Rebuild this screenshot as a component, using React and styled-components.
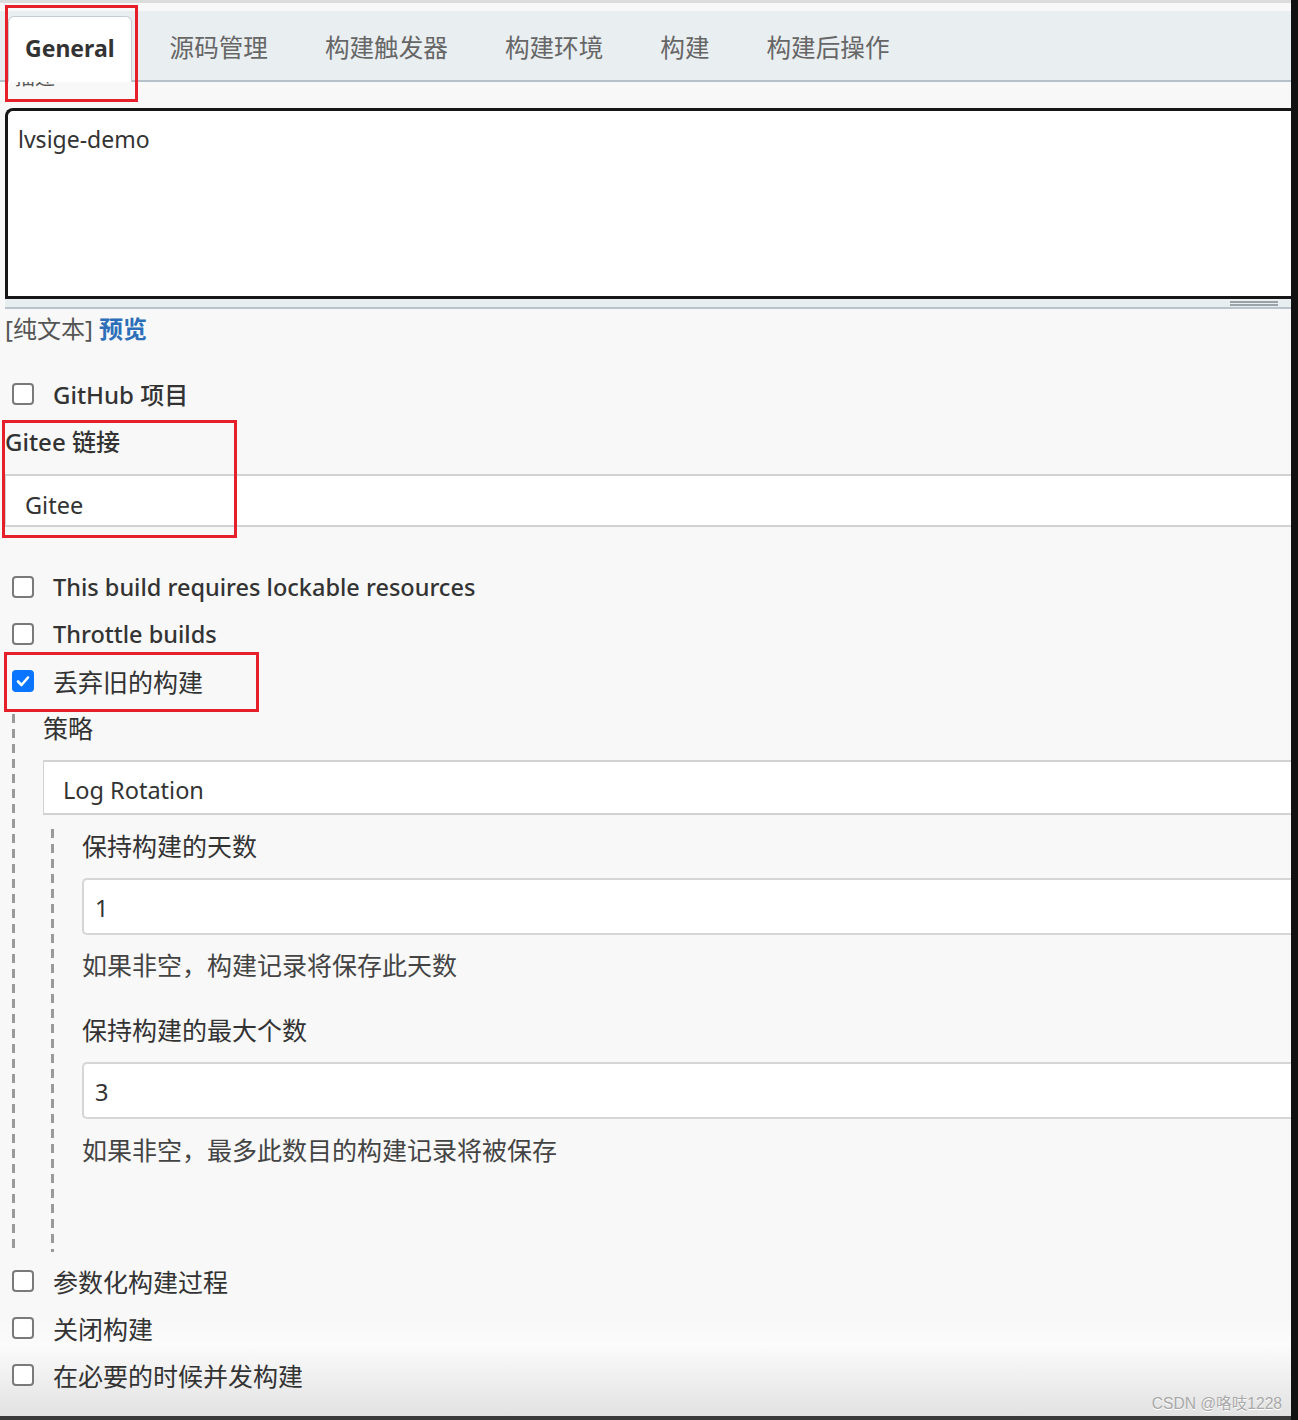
import React from "react";
import styled, { createGlobalStyle } from "styled-components";

const GlobalStyle = createGlobalStyle`
  html, body { margin: 0; padding: 0; }
  body {
    background: #f8f8f8;
    font-family: "Noto Sans", "Noto Sans CJK SC", sans-serif;
    color: #333;
  }
  * { box-sizing: border-box; }
`;

const Frame = styled.div`
  position: relative;
  width: 1298px;
  height: 1420px;
  display: flex;
  overflow: hidden;
  background: linear-gradient(#f8f8f8 0, #f8f8f8 1320px, #fbfbfb 1345px, #e2e2e2 1416px);
`;

const Main = styled.div`
  flex: 1;
  min-width: 0;
  display: flex;
  flex-direction: column;
  border-top: 3px solid #dcdcdc;
  border-bottom: 4px solid #3a3a3a;
`;

const RightEdge = styled.div`
  width: 7px;
  background: #111;
`;

const TabBar = styled.div`
  position: relative;
  z-index: 1;
  margin-top: 8px;
  height: 71px;
  background: #e9eef1;
  border-bottom: 2px solid #b7c1c9;
  display: flex;
  align-items: flex-end;
  padding-left: 8px;
`;

const Tab = styled.div`
  height: 66px;
  display: flex;
  align-items: center;
  padding-bottom: 3px;
  font-size: ${(p) => (p.$active ? "23px" : "24.6px")};
  font-weight: ${(p) => (p.$active ? 700 : 400)};
  color: ${(p) => (p.$active ? "#333" : "#666")};
  padding-left: ${(p) => (p.$active ? "16px" : "29px")};
  padding-right: ${(p) => (p.$active ? "16px" : "28px")};
  margin-bottom: ${(p) => (p.$active ? "-2px" : "0")};
  margin-right: ${(p) => (p.$active ? "9px" : "0")};
  background: ${(p) => (p.$active ? "#fff" : "transparent")};
  border: ${(p) => (p.$active ? "1px solid #c5ccd2" : "none")};
  border-bottom: none;
  border-radius: 6px 6px 0 0;
  white-space: nowrap;
`;

const DescLabel = styled.div`
  margin-top: -16px;
  padding-left: 15px;
  font-size: 20px;
  line-height: 24px;
  color: #555;
`;

const TextArea = styled.textarea`
  display: block;
  margin: 18px 0 0 5px;
  width: calc(100% - 5px);
  height: 191px;
  border: 3px solid #161616;
  border-right: none;
  border-radius: 8px 0 0 0;
  padding: 12px 10px;
  font-family: inherit;
  font-size: 23px;
  line-height: 32px;
  color: #333;
  background: #fff;
  resize: none;
  outline: none;
`;

const ResizeStrip = styled.div`
  margin-left: 5px;
  height: 10px;
  background: #e8edf0;
  border-bottom: 2px solid #b9c3cb;
  display: flex;
  justify-content: flex-end;
  align-items: center;
  padding-right: 13px;
`;

const Grip = styled.div`
  width: 48px;
  height: 5px;
  border-top: 2px solid #9aa3a8;
  border-bottom: 2px solid #9aa3a8;
`;

const PreviewRow = styled.div`
  margin-top: 4px;
  padding-left: 5px;
  font-size: 24px;
  line-height: 32px;
  color: #555;
`;

const PreviewLink = styled.span`
  color: #2c6fb8;
  font-weight: 700;
`;

const CheckRow = styled.div`
  display: flex;
  align-items: center;
  height: 47px;
  padding-left: 12px;
  margin-top: ${(p) => p.$mt || 0}px;
  font-size: ${(p) => p.$size}px;
  font-weight: ${(p) => p.$weight};
  color: #333;
`;

const Box = styled.span`
  width: 22px;
  height: 22px;
  margin-right: 19px;
  border-radius: 4px;
  border: ${(p) => (p.$checked ? "none" : "2px solid #7a7a7a")};
  background: ${(p) => (p.$checked ? "#0a75ff" : "#fff")};
  display: flex;
  align-items: center;
  justify-content: center;
  flex: none;
`;

const FieldLabel = styled.div`
  padding-left: ${(p) => p.$pl || 0}px;
  margin-top: ${(p) => p.$mt || 0}px;
  font-size: ${(p) => p.$size || 25}px;
  line-height: 32px;
  font-weight: ${(p) => p.$weight || 400};
  color: #333;
`;

const SelectBox = styled.div`
  margin-top: ${(p) => p.$mt || 0}px;
  margin-left: ${(p) => p.$ml || 0}px;
  height: ${(p) => p.$h}px;
  background: #fff;
  border-style: solid;
  border-color: #d2d2d2;
  border-width: 2px 0 2px 1px;
  display: flex;
  align-items: center;
  padding-left: 19px;
  padding-top: ${(p) => p.$pt || 0}px;
  font-size: 23.5px;
  color: #333;
`;

const InputBox = styled.div`
  margin-top: ${(p) => p.$mt || 0}px;
  height: 57px;
  background: #fff;
  border: 2px solid #d6d6d6;
  border-right: none;
  border-radius: 5px 0 0 5px;
  display: flex;
  align-items: center;
  padding-left: 11px;
  padding-top: 3px;
  font-size: 23.5px;
  color: #333;
`;

const Help = styled.div`
  margin-top: ${(p) => p.$mt || 0}px;
  font-size: 25px;
  line-height: 32px;
  color: #444;
`;

const Nested = styled.div`
  margin-left: ${(p) => p.$ml}px;
  margin-top: ${(p) => p.$mt || 0}px;
  background-image: repeating-linear-gradient(to bottom, #9a9a9a 0, #9a9a9a 9px, transparent 9px, transparent 15px);
  background-repeat: no-repeat;
  background-size: 3px 100%;
  background-position: left top 4px;
  padding-left: 31px;
  padding-top: ${(p) => p.$pt || 0}px;
  padding-bottom: ${(p) => p.$pb || 0}px;
`;

const Annotation = styled.div`
  position: absolute;
  left: ${(p) => p.$x}px;
  top: ${(p) => p.$y}px;
  width: ${(p) => p.$w}px;
  height: ${(p) => p.$h}px;
  border: 3px solid #e5202b;
  pointer-events: none;
  z-index: 2;
`;

const Watermark = styled.div`
  position: absolute;
  right: 16px;
  bottom: 7px;
  font-family: "Liberation Sans", "Noto Sans CJK SC", sans-serif;
  font-size: 15.6px;
  color: #a8a8a8;
  text-shadow: 0 1px 0 #fff;
`;

const Check = () => (
  <svg width="16" height="16" viewBox="0 0 16 16">
    <path d="M3 8.5 L6.5 12 L13 4.5" fill="none" stroke="#fff" strokeWidth="2.6" strokeLinecap="round" strokeLinejoin="round" />
  </svg>
);

const CheckItem = ({ checked, children, mt, size = 25, weight = 400 }) => (
  <CheckRow $mt={mt} $size={size} $weight={weight}>
    <Box $checked={checked}>{checked && <Check />}</Box>
    {children}
  </CheckRow>
);

const tabs = ["General", "源码管理", "构建触发器", "构建环境", "构建", "构建后操作"];

export default function App() {
  return (
    <>
      <GlobalStyle />
      <Frame>
        <Main>
          <TabBar>
            {tabs.map((t, i) => (
              <Tab key={t} $active={i === 0}>{t}</Tab>
            ))}
          </TabBar>
          <DescLabel>描述</DescLabel>
          <TextArea readOnly defaultValue="lvsige-demo" />
          <ResizeStrip>
            <Grip />
          </ResizeStrip>
          <PreviewRow>
            [纯文本] <PreviewLink>预览</PreviewLink>
          </PreviewRow>
          <CheckItem mt={25} size={24} weight={500}>GitHub 项目</CheckItem>
          <FieldLabel $pl={5} $mt={9} $size={24} $weight={500}>Gitee 链接</FieldLabel>
          <SelectBox $mt={16} $ml={5} $h={53} $pt={8}>Gitee</SelectBox>
          <CheckItem mt={36} size={23.5} weight={500}>This build requires lockable resources</CheckItem>
          <CheckItem size={23.5} weight={500}>Throttle builds</CheckItem>
          <CheckItem checked>丢弃旧的构建</CheckItem>
          <Nested $ml={12} $mt={6} $pt={2}>
            <FieldLabel>策略</FieldLabel>
            <SelectBox $mt={16} $h={55} $pt={5}>Log Rotation</SelectBox>
            <Nested $ml={8} $mt={10} $pt={5} $pb={86}>
              <FieldLabel>保持构建的天数</FieldLabel>
              <InputBox $mt={16}>1</InputBox>
              <Help $mt={14}>如果非空，构建记录将保存此天数</Help>
              <FieldLabel $mt={33}>保持构建的最大个数</FieldLabel>
              <InputBox $mt={16}>3</InputBox>
              <Help $mt={15}>如果非空，最多此数目的构建记录将被保存</Help>
            </Nested>
          </Nested>
          <CheckItem mt={5}>参数化构建过程</CheckItem>
          <CheckItem>关闭构建</CheckItem>
          <CheckItem>在必要的时候并发构建</CheckItem>
        </Main>
        <RightEdge />
        <Annotation $x={5} $y={5} $w={133} $h={97} />
        <Annotation $x={2} $y={420} $w={235} $h={118} />
        <Annotation $x={4} $y={652} $w={255} $h={60} />
        <Watermark>CSDN @咯吱1228</Watermark>
      </Frame>
    </>
  );
}
